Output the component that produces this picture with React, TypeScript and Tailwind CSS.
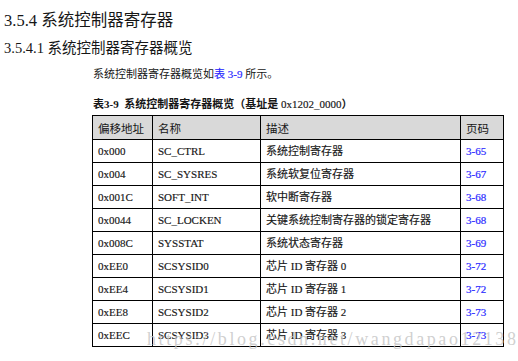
import React from 'react';

const rows = [
  { offset: '0x000', name: 'SC_CTRL', desc: '系统控制寄存器', page: '3-65' },
  { offset: '0x004', name: 'SC_SYSRES', desc: '系统软复位寄存器', page: '3-67' },
  { offset: '0x001C', name: 'SOFT_INT', desc: '软中断寄存器', page: '3-68' },
  { offset: '0x0044', name: 'SC_LOCKEN', desc: '关键系统控制寄存器的锁定寄存器', page: '3-68' },
  { offset: '0x008C', name: 'SYSSTAT', desc: '系统状态寄存器', page: '3-69' },
  { offset: '0xEE0', name: 'SCSYSID0', desc: '芯片 ID 寄存器 0', page: '3-72' },
  { offset: '0xEE4', name: 'SCSYSID1', desc: '芯片 ID 寄存器 1', page: '3-72' },
  { offset: '0xEE8', name: 'SCSYSID2', desc: '芯片 ID 寄存器 2', page: '3-73' },
  { offset: '0xEEC', name: 'SCSYSID3', desc: '芯片 ID 寄存器 3', page: '3-73' },
];

const serif = 'font-["Liberation_Serif","Noto_Sans_CJK_SC",serif]';

export default function App() {
  return (
    <div className={`relative w-[518px] h-[361px] overflow-hidden bg-white text-[#161616] ${serif}`}>
      {/* Headings */}
      <h1 className="pl-[4px] pt-[10px] text-[16.5px] leading-[22px] font-normal">
        3.5.4 系统控制器寄存器
      </h1>
      <h2 className="pl-[4px] pt-[6px] text-[14.5px] leading-[20px] font-normal">
        3.5.4.1 系统控制器寄存器概览
      </h2>

      <p className="pl-[93px] pt-[8px] text-[11px] leading-[16px]">
        系统控制器寄存器概览如
        <span className="text-[#2b2bff] [-webkit-text-stroke:0.2px_#2b2bff]">表 3-9</span> 所示。
      </p>

      <p className="pl-[93px] pt-[14px] text-[11px] leading-[16px]">
        <span className="font-bold">表3-9&nbsp; 系统控制器寄存器概览（基址是 </span>
        <span className="[-webkit-text-stroke:0.15px_#161616]">0x1202_0000</span>
        <span className="font-bold">）</span>
      </p>

      {/* Register table */}
      <table className="ml-[92px] mt-[3px] w-[411px] table-fixed border-collapse border-[1.5px] border-black text-[11px]">
        <colgroup>
          <col className="w-[60px]" />
          <col className="w-[108px]" />
          <col className="w-[200px]" />
          <col className="w-[43px]" />
        </colgroup>
        <thead>
          <tr className="h-[24px] bg-[#d9d9d9]">
            {['偏移地址', '名称', '描述', '页码'].map((h) => (
              <th
                key={h}
                className="border-[1.5px] border-black px-[5px] text-left font-normal font-['Noto_Sans_CJK_SC',sans-serif] text-[11.5px] leading-[14px]"
              >
                {h}
              </th>
            ))}
          </tr>
        </thead>
        <tbody>
          {rows.map((r) => (
            <tr key={r.offset} className="h-[23px]">
              <td className="border-[1.5px] border-black px-[5px] leading-[14px] [-webkit-text-stroke:0.15px_#161616]">
                {r.offset}
              </td>
              <td className="border-[1.5px] border-black px-[5px] leading-[14px] [-webkit-text-stroke:0.15px_#161616]">
                {r.name}
              </td>
              <td className="border-[1.5px] border-black px-[5px] leading-[14px] whitespace-nowrap [-webkit-text-stroke:0.15px_#161616]">
                {r.desc}
              </td>
              <td className="border-[1.5px] border-black px-[5px] leading-[14px] text-[#2b2bff] [-webkit-text-stroke:0.2px_#2b2bff]">
                {r.page}
              </td>
            </tr>
          ))}
        </tbody>
      </table>

      {/* Watermark */}
      <div className="pointer-events-none absolute left-[147px] top-[329px] whitespace-nowrap text-[18px] leading-[20px] tracking-[2.6px] text-[#c4c4c4]/80 font-['Liberation_Serif',serif]">
        https://blog.csdn.net/wangdapao12138
      </div>
    </div>
  );
}
